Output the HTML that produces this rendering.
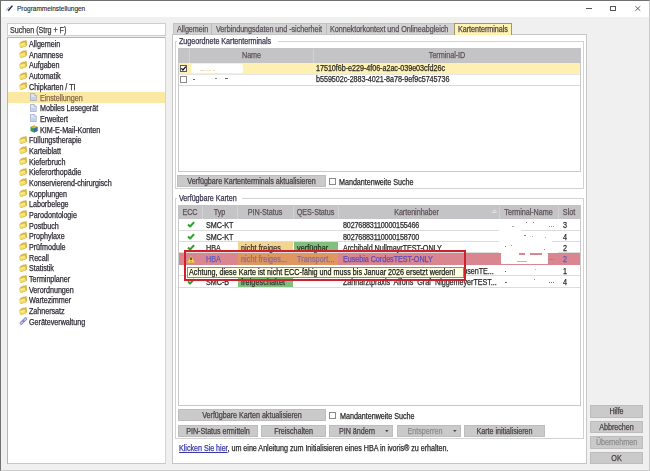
<!DOCTYPE html>
<html><head><meta charset="utf-8">
<style>
*{box-sizing:border-box;margin:0;padding:0}
html,body{width:650px;height:471px;overflow:hidden;background:#f0f0f0}
body{position:relative;font-family:"Liberation Sans",sans-serif;font-size:7.4px;color:#3a3640}
.a{position:absolute}
svg{position:absolute;overflow:visible}
.t{position:absolute;white-space:nowrap;line-height:10px;font-size:8.2px;letter-spacing:-0.05px;-webkit-text-stroke:0.25px currentColor;transform:scaleX(0.88);transform-origin:0 0}
.c{transform-origin:50% 0}
.btn{position:absolute;background:#cacaca;border:1px solid #bababa}
.cb{position:absolute;width:7px;height:7px;border:1px solid #7a7a7a;background:#fff}
</style></head><body><div style="position:absolute;left:0;top:0;width:650px;height:471px;filter:blur(0.3px)">

<div class="a" style="left:0px;top:0px;width:650px;height:471px;border:1px solid #707070;border-right-color:#c8c8c8;border-bottom-color:#cacaca"></div>
<div class="a" style="left:1px;top:1px;width:648px;height:16px;background:#fff"></div>
<svg style="left:5px;top:4px" width="9" height="9" viewBox="0 0 9 9"><path d="M1.2 6.6 L3.8 3.2" stroke="#7a8aa8" stroke-width="0.8"/><path d="M3.2 6.8 L7.4 1.6" stroke="#1a2a4a" stroke-width="1.5"/></svg>
<div class="t" style="left:16.6px;top:4.3px;font-size:7.45px;letter-spacing:-0.05px;color:#1e1e1e;-webkit-text-stroke:0.1px #1e1e1e">Programmeinstellungen</div>
<div class="a" style="left:586px;top:8px;width:6px;height:1px;background:#555"></div>
<div class="a" style="left:610px;top:6px;width:6px;height:5px;border:1px solid #555"></div>
<svg style="left:635px;top:6px" width="6" height="5" viewBox="0 0 6 5"><path d="M0.3 0.2 L5.3 4.8 M5.3 0.2 L0.3 4.8" stroke="#444" stroke-width="0.8"/></svg>
<div class="a" style="left:7px;top:23px;width:159px;height:13px;background:#fff;border:1px solid #cfcfcf"></div>
<div class="t" style="left:10px;top:25.5px;color:#3a3a3a">Suchen (Strg + F)</div>
<div class="a" style="left:7px;top:37px;width:159px;height:427px;background:#fff;border:1px solid #b4b4b4;border-right-color:#d4d4d4;border-bottom-color:#c8c8c8"></div>
<div class="a" style="left:8px;top:92px;width:157px;height:11px;background:#fbe8a2"></div>
<svg style="left:19px;top:39.5px" width="8" height="8" viewBox="0 0 8 8"><path d="M1.6 2.2 L4.4 0.9 L5 1.2 L7.2 0.4 L7.7 5.2 L2.6 7.4 Z" fill="#e2bc34" stroke="#b08e1e" stroke-width="0.45"/><path d="M0.4 3.6 L6.2 2 L7.2 6 L1.5 7.7 Z" fill="#f8e064" stroke="#c8a830" stroke-width="0.4"/><path d="M1.4 4.2 L5.6 3 L6 4 L1.8 5.3 Z" fill="#fff2a8" opacity="0.8"/></svg>
<div class="t" style="left:29px;top:40.1px;color:#2e2a34">Allgemein</div>
<svg style="left:19px;top:50.2px" width="8" height="8" viewBox="0 0 8 8"><path d="M1.6 2.2 L4.4 0.9 L5 1.2 L7.2 0.4 L7.7 5.2 L2.6 7.4 Z" fill="#e2bc34" stroke="#b08e1e" stroke-width="0.45"/><path d="M0.4 3.6 L6.2 2 L7.2 6 L1.5 7.7 Z" fill="#f8e064" stroke="#c8a830" stroke-width="0.4"/><path d="M1.4 4.2 L5.6 3 L6 4 L1.8 5.3 Z" fill="#fff2a8" opacity="0.8"/></svg>
<div class="t" style="left:29px;top:50.78px;color:#2e2a34">Anamnese</div>
<svg style="left:19px;top:60.9px" width="8" height="8" viewBox="0 0 8 8"><path d="M1.6 2.2 L4.4 0.9 L5 1.2 L7.2 0.4 L7.7 5.2 L2.6 7.4 Z" fill="#e2bc34" stroke="#b08e1e" stroke-width="0.45"/><path d="M0.4 3.6 L6.2 2 L7.2 6 L1.5 7.7 Z" fill="#f8e064" stroke="#c8a830" stroke-width="0.4"/><path d="M1.4 4.2 L5.6 3 L6 4 L1.8 5.3 Z" fill="#fff2a8" opacity="0.8"/></svg>
<div class="t" style="left:29px;top:61.46px;color:#2e2a34">Aufgaben</div>
<svg style="left:19px;top:71.5px" width="8" height="8" viewBox="0 0 8 8"><path d="M1.6 2.2 L4.4 0.9 L5 1.2 L7.2 0.4 L7.7 5.2 L2.6 7.4 Z" fill="#e2bc34" stroke="#b08e1e" stroke-width="0.45"/><path d="M0.4 3.6 L6.2 2 L7.2 6 L1.5 7.7 Z" fill="#f8e064" stroke="#c8a830" stroke-width="0.4"/><path d="M1.4 4.2 L5.6 3 L6 4 L1.8 5.3 Z" fill="#fff2a8" opacity="0.8"/></svg>
<div class="t" style="left:29px;top:72.14px;color:#2e2a34">Automatik</div>
<svg style="left:19px;top:82.2px" width="8" height="8" viewBox="0 0 8 8"><path d="M1.6 2.2 L4.4 0.9 L5 1.2 L7.2 0.4 L7.7 5.2 L2.6 7.4 Z" fill="#e2bc34" stroke="#b08e1e" stroke-width="0.45"/><path d="M0.4 3.6 L6.2 2 L7.2 6 L1.5 7.7 Z" fill="#f8e064" stroke="#c8a830" stroke-width="0.4"/><path d="M1.4 4.2 L5.6 3 L6 4 L1.8 5.3 Z" fill="#fff2a8" opacity="0.8"/></svg>
<div class="t" style="left:29px;top:82.82px;color:#2e2a34">Chipkarten / TI</div>
<svg style="left:30px;top:92.9px" width="7" height="8" viewBox="0 0 7 8"><path d="M0.5 0.5 H4.3 L6.3 2.5 V7.5 H0.5 Z" fill="#dde5f4" stroke="#8694b4" stroke-width="0.6"/><path d="M1.2 4 H5.6 V7 H1.2 Z" fill="#c4d0ec"/><path d="M4.3 0.5 V2.5 H6.3" fill="#fff" stroke="#8694b4" stroke-width="0.5"/></svg>
<div class="t" style="left:39.5px;top:93.5px;color:#86684a">Einstellungen</div>
<svg style="left:30px;top:103.6px" width="7" height="8" viewBox="0 0 7 8"><path d="M0.5 0.5 H4.3 L6.3 2.5 V7.5 H0.5 Z" fill="#dde5f4" stroke="#8694b4" stroke-width="0.6"/><path d="M1.2 4 H5.6 V7 H1.2 Z" fill="#c4d0ec"/><path d="M4.3 0.5 V2.5 H6.3" fill="#fff" stroke="#8694b4" stroke-width="0.5"/></svg>
<div class="t" style="left:39.5px;top:104.18px;color:#2e2a34">Mobiles Lesegerät</div>
<svg style="left:30px;top:114.3px" width="7" height="8" viewBox="0 0 7 8"><path d="M0.5 0.5 H4.3 L6.3 2.5 V7.5 H0.5 Z" fill="#dde5f4" stroke="#8694b4" stroke-width="0.6"/><path d="M1.2 4 H5.6 V7 H1.2 Z" fill="#c4d0ec"/><path d="M4.3 0.5 V2.5 H6.3" fill="#fff" stroke="#8694b4" stroke-width="0.5"/></svg>
<div class="t" style="left:39.5px;top:114.86px;color:#2e2a34">Erweitert</div>
<svg style="left:30px;top:124.9px" width="8" height="8" viewBox="0 0 8 8"><path d="M4 0.5 L7.5 2 V6 L4 7.5 L0.5 6 V2 Z" fill="#3a9a4a"/><path d="M0.5 2 L4 3.5 L7.5 2 L4 0.5 Z" fill="#e8b030"/><path d="M4 3.5 V7.5 L7.5 6 V2 Z" fill="#3a6ab0"/></svg>
<div class="t" style="left:39.5px;top:125.54px;color:#2e2a34">KIM-E-Mail-Konten</div>
<svg style="left:19px;top:135.6px" width="8" height="8" viewBox="0 0 8 8"><path d="M1.6 2.2 L4.4 0.9 L5 1.2 L7.2 0.4 L7.7 5.2 L2.6 7.4 Z" fill="#e2bc34" stroke="#b08e1e" stroke-width="0.45"/><path d="M0.4 3.6 L6.2 2 L7.2 6 L1.5 7.7 Z" fill="#f8e064" stroke="#c8a830" stroke-width="0.4"/><path d="M1.4 4.2 L5.6 3 L6 4 L1.8 5.3 Z" fill="#fff2a8" opacity="0.8"/></svg>
<div class="t" style="left:29px;top:136.22px;color:#2e2a34">Füllungstherapie</div>
<svg style="left:19px;top:146.3px" width="8" height="8" viewBox="0 0 8 8"><path d="M1.6 2.2 L4.4 0.9 L5 1.2 L7.2 0.4 L7.7 5.2 L2.6 7.4 Z" fill="#e2bc34" stroke="#b08e1e" stroke-width="0.45"/><path d="M0.4 3.6 L6.2 2 L7.2 6 L1.5 7.7 Z" fill="#f8e064" stroke="#c8a830" stroke-width="0.4"/><path d="M1.4 4.2 L5.6 3 L6 4 L1.8 5.3 Z" fill="#fff2a8" opacity="0.8"/></svg>
<div class="t" style="left:29px;top:146.9px;color:#2e2a34">Karteiblatt</div>
<svg style="left:19px;top:157.0px" width="8" height="8" viewBox="0 0 8 8"><path d="M1.6 2.2 L4.4 0.9 L5 1.2 L7.2 0.4 L7.7 5.2 L2.6 7.4 Z" fill="#e2bc34" stroke="#b08e1e" stroke-width="0.45"/><path d="M0.4 3.6 L6.2 2 L7.2 6 L1.5 7.7 Z" fill="#f8e064" stroke="#c8a830" stroke-width="0.4"/><path d="M1.4 4.2 L5.6 3 L6 4 L1.8 5.3 Z" fill="#fff2a8" opacity="0.8"/></svg>
<div class="t" style="left:29px;top:157.58px;color:#2e2a34">Kieferbruch</div>
<svg style="left:19px;top:167.7px" width="8" height="8" viewBox="0 0 8 8"><path d="M1.6 2.2 L4.4 0.9 L5 1.2 L7.2 0.4 L7.7 5.2 L2.6 7.4 Z" fill="#e2bc34" stroke="#b08e1e" stroke-width="0.45"/><path d="M0.4 3.6 L6.2 2 L7.2 6 L1.5 7.7 Z" fill="#f8e064" stroke="#c8a830" stroke-width="0.4"/><path d="M1.4 4.2 L5.6 3 L6 4 L1.8 5.3 Z" fill="#fff2a8" opacity="0.8"/></svg>
<div class="t" style="left:29px;top:168.26px;color:#2e2a34">Kieferorthopädie</div>
<svg style="left:19px;top:178.3px" width="8" height="8" viewBox="0 0 8 8"><path d="M1.6 2.2 L4.4 0.9 L5 1.2 L7.2 0.4 L7.7 5.2 L2.6 7.4 Z" fill="#e2bc34" stroke="#b08e1e" stroke-width="0.45"/><path d="M0.4 3.6 L6.2 2 L7.2 6 L1.5 7.7 Z" fill="#f8e064" stroke="#c8a830" stroke-width="0.4"/><path d="M1.4 4.2 L5.6 3 L6 4 L1.8 5.3 Z" fill="#fff2a8" opacity="0.8"/></svg>
<div class="t" style="left:29px;top:178.94px;color:#2e2a34">Konservierend-chirurgisch</div>
<svg style="left:19px;top:189.0px" width="8" height="8" viewBox="0 0 8 8"><path d="M1.6 2.2 L4.4 0.9 L5 1.2 L7.2 0.4 L7.7 5.2 L2.6 7.4 Z" fill="#e2bc34" stroke="#b08e1e" stroke-width="0.45"/><path d="M0.4 3.6 L6.2 2 L7.2 6 L1.5 7.7 Z" fill="#f8e064" stroke="#c8a830" stroke-width="0.4"/><path d="M1.4 4.2 L5.6 3 L6 4 L1.8 5.3 Z" fill="#fff2a8" opacity="0.8"/></svg>
<div class="t" style="left:29px;top:189.62px;color:#2e2a34">Kopplungen</div>
<svg style="left:19px;top:199.7px" width="8" height="8" viewBox="0 0 8 8"><path d="M1.6 2.2 L4.4 0.9 L5 1.2 L7.2 0.4 L7.7 5.2 L2.6 7.4 Z" fill="#e2bc34" stroke="#b08e1e" stroke-width="0.45"/><path d="M0.4 3.6 L6.2 2 L7.2 6 L1.5 7.7 Z" fill="#f8e064" stroke="#c8a830" stroke-width="0.4"/><path d="M1.4 4.2 L5.6 3 L6 4 L1.8 5.3 Z" fill="#fff2a8" opacity="0.8"/></svg>
<div class="t" style="left:29px;top:200.3px;color:#2e2a34">Laborbelege</div>
<svg style="left:19px;top:210.4px" width="8" height="8" viewBox="0 0 8 8"><path d="M1.6 2.2 L4.4 0.9 L5 1.2 L7.2 0.4 L7.7 5.2 L2.6 7.4 Z" fill="#e2bc34" stroke="#b08e1e" stroke-width="0.45"/><path d="M0.4 3.6 L6.2 2 L7.2 6 L1.5 7.7 Z" fill="#f8e064" stroke="#c8a830" stroke-width="0.4"/><path d="M1.4 4.2 L5.6 3 L6 4 L1.8 5.3 Z" fill="#fff2a8" opacity="0.8"/></svg>
<div class="t" style="left:29px;top:210.98px;color:#2e2a34">Parodontologie</div>
<svg style="left:19px;top:221.1px" width="8" height="8" viewBox="0 0 8 8"><path d="M1.6 2.2 L4.4 0.9 L5 1.2 L7.2 0.4 L7.7 5.2 L2.6 7.4 Z" fill="#e2bc34" stroke="#b08e1e" stroke-width="0.45"/><path d="M0.4 3.6 L6.2 2 L7.2 6 L1.5 7.7 Z" fill="#f8e064" stroke="#c8a830" stroke-width="0.4"/><path d="M1.4 4.2 L5.6 3 L6 4 L1.8 5.3 Z" fill="#fff2a8" opacity="0.8"/></svg>
<div class="t" style="left:29px;top:221.66px;color:#2e2a34">Postbuch</div>
<svg style="left:19px;top:231.7px" width="8" height="8" viewBox="0 0 8 8"><path d="M1.6 2.2 L4.4 0.9 L5 1.2 L7.2 0.4 L7.7 5.2 L2.6 7.4 Z" fill="#e2bc34" stroke="#b08e1e" stroke-width="0.45"/><path d="M0.4 3.6 L6.2 2 L7.2 6 L1.5 7.7 Z" fill="#f8e064" stroke="#c8a830" stroke-width="0.4"/><path d="M1.4 4.2 L5.6 3 L6 4 L1.8 5.3 Z" fill="#fff2a8" opacity="0.8"/></svg>
<div class="t" style="left:29px;top:232.34px;color:#2e2a34">Prophylaxe</div>
<svg style="left:19px;top:242.4px" width="8" height="8" viewBox="0 0 8 8"><path d="M1.6 2.2 L4.4 0.9 L5 1.2 L7.2 0.4 L7.7 5.2 L2.6 7.4 Z" fill="#e2bc34" stroke="#b08e1e" stroke-width="0.45"/><path d="M0.4 3.6 L6.2 2 L7.2 6 L1.5 7.7 Z" fill="#f8e064" stroke="#c8a830" stroke-width="0.4"/><path d="M1.4 4.2 L5.6 3 L6 4 L1.8 5.3 Z" fill="#fff2a8" opacity="0.8"/></svg>
<div class="t" style="left:29px;top:243.02px;color:#2e2a34">Prüfmodule</div>
<svg style="left:19px;top:253.1px" width="8" height="8" viewBox="0 0 8 8"><path d="M1.6 2.2 L4.4 0.9 L5 1.2 L7.2 0.4 L7.7 5.2 L2.6 7.4 Z" fill="#e2bc34" stroke="#b08e1e" stroke-width="0.45"/><path d="M0.4 3.6 L6.2 2 L7.2 6 L1.5 7.7 Z" fill="#f8e064" stroke="#c8a830" stroke-width="0.4"/><path d="M1.4 4.2 L5.6 3 L6 4 L1.8 5.3 Z" fill="#fff2a8" opacity="0.8"/></svg>
<div class="t" style="left:29px;top:253.7px;color:#2e2a34">Recall</div>
<svg style="left:19px;top:263.8px" width="8" height="8" viewBox="0 0 8 8"><path d="M1.6 2.2 L4.4 0.9 L5 1.2 L7.2 0.4 L7.7 5.2 L2.6 7.4 Z" fill="#e2bc34" stroke="#b08e1e" stroke-width="0.45"/><path d="M0.4 3.6 L6.2 2 L7.2 6 L1.5 7.7 Z" fill="#f8e064" stroke="#c8a830" stroke-width="0.4"/><path d="M1.4 4.2 L5.6 3 L6 4 L1.8 5.3 Z" fill="#fff2a8" opacity="0.8"/></svg>
<div class="t" style="left:29px;top:264.38px;color:#2e2a34">Statistik</div>
<svg style="left:19px;top:274.5px" width="8" height="8" viewBox="0 0 8 8"><path d="M1.6 2.2 L4.4 0.9 L5 1.2 L7.2 0.4 L7.7 5.2 L2.6 7.4 Z" fill="#e2bc34" stroke="#b08e1e" stroke-width="0.45"/><path d="M0.4 3.6 L6.2 2 L7.2 6 L1.5 7.7 Z" fill="#f8e064" stroke="#c8a830" stroke-width="0.4"/><path d="M1.4 4.2 L5.6 3 L6 4 L1.8 5.3 Z" fill="#fff2a8" opacity="0.8"/></svg>
<div class="t" style="left:29px;top:275.06px;color:#2e2a34">Terminplaner</div>
<svg style="left:19px;top:285.1px" width="8" height="8" viewBox="0 0 8 8"><path d="M1.6 2.2 L4.4 0.9 L5 1.2 L7.2 0.4 L7.7 5.2 L2.6 7.4 Z" fill="#e2bc34" stroke="#b08e1e" stroke-width="0.45"/><path d="M0.4 3.6 L6.2 2 L7.2 6 L1.5 7.7 Z" fill="#f8e064" stroke="#c8a830" stroke-width="0.4"/><path d="M1.4 4.2 L5.6 3 L6 4 L1.8 5.3 Z" fill="#fff2a8" opacity="0.8"/></svg>
<div class="t" style="left:29px;top:285.74px;color:#2e2a34">Verordnungen</div>
<svg style="left:19px;top:295.8px" width="8" height="8" viewBox="0 0 8 8"><path d="M1.6 2.2 L4.4 0.9 L5 1.2 L7.2 0.4 L7.7 5.2 L2.6 7.4 Z" fill="#e2bc34" stroke="#b08e1e" stroke-width="0.45"/><path d="M0.4 3.6 L6.2 2 L7.2 6 L1.5 7.7 Z" fill="#f8e064" stroke="#c8a830" stroke-width="0.4"/><path d="M1.4 4.2 L5.6 3 L6 4 L1.8 5.3 Z" fill="#fff2a8" opacity="0.8"/></svg>
<div class="t" style="left:29px;top:296.42px;color:#2e2a34">Wartezimmer</div>
<svg style="left:19px;top:306.5px" width="8" height="8" viewBox="0 0 8 8"><path d="M1.6 2.2 L4.4 0.9 L5 1.2 L7.2 0.4 L7.7 5.2 L2.6 7.4 Z" fill="#e2bc34" stroke="#b08e1e" stroke-width="0.45"/><path d="M0.4 3.6 L6.2 2 L7.2 6 L1.5 7.7 Z" fill="#f8e064" stroke="#c8a830" stroke-width="0.4"/><path d="M1.4 4.2 L5.6 3 L6 4 L1.8 5.3 Z" fill="#fff2a8" opacity="0.8"/></svg>
<div class="t" style="left:29px;top:307.1px;color:#2e2a34">Zahnersatz</div>
<svg style="left:19px;top:317.2px" width="9" height="8" viewBox="0 0 9 8"><path d="M2.2 6.2 L6.6 1.8" stroke="#8a8ac0" stroke-width="3.2" stroke-linecap="round"/><path d="M2.2 6.2 L6.6 1.8" stroke="#c4c4ec" stroke-width="1.6" stroke-linecap="round"/><circle cx="4.4" cy="4" r="1.1" fill="#8080b8"/></svg>
<div class="t" style="left:29px;top:317.78px;color:#2e2a34">Geräteverwaltung</div>
<div class="a" style="left:173px;top:23px;width:282px;height:12px;background:#d3d3d3;border:1px solid #c2c2c2"></div>
<div class="a" style="left:211px;top:24px;width:1px;height:10px;background:#bcbcbc"></div>
<div class="a" style="left:326px;top:24px;width:1px;height:10px;background:#bcbcbc"></div>
<div class="t" style="left:176.5px;top:24.6px;color:#5a5058">Allgemein</div>
<div class="t" style="left:215.5px;top:24.6px;color:#5a5058">Verbindungsdaten und -sicherheit</div>
<div class="t" style="left:330px;top:24.6px;color:#5a5058">Konnektorkontext und Onlineabgleich</div>
<div class="a" style="left:172px;top:34px;width:415px;height:430px;background:#fff;border:1px solid #c6c6c6"></div>
<div class="a" style="left:454px;top:23px;width:58px;height:12px;background:#fff3b4;border:1px solid #a09870;border-bottom:none"></div>
<div class="t" style="left:458px;top:24.9px;color:#4e4048">Kartenterminals</div>
<div class="a" style="left:175px;top:41px;width:409px;height:148px;border:1px solid #d2d2d2"></div>
<div class="a" style="left:177px;top:37px;width:101px;height:9px;background:#fff"></div>
<div class="t" style="left:178.5px;top:36.8px;color:#3a3450">Zugeordnete Kartenterminals</div>
<div class="a" style="left:178px;top:48px;width:403px;height:124px;border:1px solid #c8c8c8;background:#fff"></div>
<div class="a" style="left:178px;top:48px;width:403px;height:15px;background:#c4c4c6"></div>
<div class="a" style="left:189px;top:49px;width:1px;height:14px;background:#d2d2d2"></div>
<div class="a" style="left:313px;top:49px;width:1px;height:14px;background:#d2d2d2"></div>
<div class="t c" style="left:190px;width:123px;text-align:center;top:51.4px;color:#5e5258">Name</div>
<div class="t c" style="left:314px;width:266px;text-align:center;top:51.4px;color:#5e5258">Terminal-ID</div>
<div class="a" style="left:179px;top:63px;width:401px;height:11px;background:#fdf0b0"></div>
<div class="a" style="left:179px;top:74px;width:401px;height:1px;background:#e6e6e6"></div>
<div class="a" style="left:179px;top:85px;width:401px;height:1px;background:#d8d8d8"></div>
<div class="a" style="left:180px;top:65px;width:7px;height:7px;background:#fff;border:1px solid #5a5a5a"></div>
<svg style="left:180px;top:65px" width="7" height="7" viewBox="0 0 7 7"><path d="M1.4 3.4 L2.9 5 L5.8 1.6" stroke="#111" stroke-width="1.2" fill="none"/></svg>
<div class="a" style="left:180px;top:76px;width:7px;height:7px;background:#fff;border:1px solid #8a8a8a"></div>
<div class="a" style="left:191px;top:64px;width:52px;height:9px;background:#fff;border-radius:2px"></div>
<div class="t" style="left:316px;top:64.4px;color:#2a2a2a">17510f6b-e229-4f06-a2ac-039e03cfd26c</div>
<div class="t" style="left:316px;top:75.4px;color:#2a2a2a">b559502c-2883-4021-8a78-9ef9c5745736</div>
<div class="a" style="left:200px;top:70px;width:4px;height:1px;background:#f0dca0"></div>
<div class="a" style="left:205px;top:70px;width:6px;height:1px;background:#f4e4b8"></div>
<div class="a" style="left:213px;top:70px;width:2px;height:1px;background:#f0dca0"></div>
<div class="a" style="left:193px;top:79px;width:2px;height:1px;background:#666"></div>
<div class="a" style="left:215px;top:78px;width:2px;height:1px;background:#888"></div>
<div class="a" style="left:225px;top:78px;width:3px;height:1px;background:#666"></div>
<div class="a" style="left:177px;top:175px;width:149px;height:12px;background:#cacaca;border:1px solid #bdbdbd"></div>
<div class="t c" style="left:177px;width:149px;text-align:center;top:176.7px;color:#4a4048">Verfügbare Kartenterminals aktualisieren</div>
<div class="a" style="left:329px;top:178px;width:7px;height:7px;background:#fff;border:1px solid #8a8a8a"></div>
<div class="t" style="left:339px;top:178.4px;color:#2a2a2a">Mandantenweite Suche</div>
<div class="a" style="left:175px;top:198px;width:409px;height:241px;border:1px solid #d2d2d2"></div>
<div class="a" style="left:177px;top:193px;width:65px;height:9px;background:#fff"></div>
<div class="t" style="left:178.5px;top:193.6px;color:#3a3450">Verfügbare Karten</div>
<div class="a" style="left:178px;top:205px;width:403px;height:201px;border:1px solid #c8c8c8;background:#fff"></div>
<div class="a" style="left:178px;top:205px;width:403px;height:14px;background:#c4c4c6"></div>
<div class="a" style="left:202px;top:206px;width:1px;height:13px;background:#d2d2d2"></div>
<div class="a" style="left:237px;top:206px;width:1px;height:13px;background:#d2d2d2"></div>
<div class="a" style="left:293px;top:206px;width:1px;height:13px;background:#d2d2d2"></div>
<div class="a" style="left:338px;top:206px;width:1px;height:13px;background:#d2d2d2"></div>
<div class="a" style="left:499px;top:206px;width:1px;height:13px;background:#d2d2d2"></div>
<div class="a" style="left:558px;top:206px;width:1px;height:13px;background:#d2d2d2"></div>
<div class="t c" style="left:178px;width:24px;text-align:center;top:208.4px;color:#5e5258">ECC</div>
<div class="t c" style="left:202px;width:35px;text-align:center;top:208.4px;color:#5e5258">Typ</div>
<div class="t c" style="left:237px;width:56px;text-align:center;top:208.4px;color:#5e5258">PIN-Status</div>
<div class="t c" style="left:293px;width:45px;text-align:center;top:208.4px;color:#5e5258">QES-Status</div>
<div class="t c" style="left:338px;width:157px;text-align:center;top:208.4px;color:#5e5258">Karteninhaber</div>
<div class="t c" style="left:499px;width:59px;text-align:center;top:208.4px;color:#5e5258">Terminal-Name</div>
<div class="t c" style="left:558px;width:22px;text-align:center;top:208.4px;color:#5e5258">Slot</div>
<svg style="left:492px;top:209px" width="5" height="4" viewBox="0 0 5 4"><path d="M0.5 3.5 L2.5 0.5 L4.5 3.5 Z" fill="none" stroke="#eeeeee" stroke-width="0.7"/></svg>
<div class="a" style="left:179px;top:230px;width:401px;height:1px;background:#dcdcdc"></div>
<svg style="left:186.9px;top:221px" width="8" height="7" viewBox="0 0 8 7"><path d="M1 3.5 L3.1 5.5 L7.1 1.1" stroke="#28a228" stroke-width="2" fill="none" stroke-linejoin="round"/></svg>
<div class="t" style="left:206px;top:221.4px;color:#2a2a2a">SMC-KT</div>
<div class="t" style="left:342.5px;top:221.4px;color:#2a2a2a;letter-spacing:-0.2px">80276883110000155466</div>
<div class="t" style="left:562.5px;top:221.4px;color:#2a2a2a">3</div>
<div class="a" style="left:179px;top:241px;width:401px;height:1px;background:#dcdcdc"></div>
<svg style="left:186.9px;top:233px" width="8" height="7" viewBox="0 0 8 7"><path d="M1 3.5 L3.1 5.5 L7.1 1.1" stroke="#28a228" stroke-width="2" fill="none" stroke-linejoin="round"/></svg>
<div class="t" style="left:206px;top:232.9px;color:#2a2a2a">SMC-KT</div>
<div class="t" style="left:342.5px;top:232.9px;color:#2a2a2a;letter-spacing:-0.2px">80276883110000158700</div>
<div class="t" style="left:562.5px;top:232.9px;color:#2a2a2a">4</div>
<div class="a" style="left:238px;top:242px;width:55px;height:10px;background:#f2d591"></div>
<div class="a" style="left:294px;top:242px;width:44px;height:10px;background:#7fc07f"></div>
<div class="a" style="left:179px;top:252px;width:401px;height:1px;background:#dcdcdc"></div>
<svg style="left:186.9px;top:244px" width="8" height="7" viewBox="0 0 8 7"><path d="M1 3.5 L3.1 5.5 L7.1 1.1" stroke="#28a228" stroke-width="2" fill="none" stroke-linejoin="round"/></svg>
<div class="t" style="left:206px;top:243.9px;color:#2a2a2a">HBA</div>
<div class="t" style="left:241px;top:243.9px;color:#3a3030;letter-spacing:0.1px">nicht freiges...</div>
<div class="t" style="left:296.5px;top:243.9px;color:#2a3020;letter-spacing:0.1px">verfügbar</div>
<div class="t" style="left:342.5px;top:243.9px;color:#2a2a2a">Archibald NullmayrTEST-ONLY</div>
<div class="t" style="left:562.5px;top:243.9px;color:#2a2a2a">2</div>
<div class="a" style="left:179px;top:253px;width:401px;height:12px;background:#d98690"></div>
<div class="a" style="left:238px;top:253px;width:100px;height:12px;background:#df9660"></div>
<svg style="left:187px;top:255.6px" width="8" height="7" viewBox="0 0 8 7"><path d="M4 0.3 L7.5 6.4 H0.5 Z" fill="#f4e23a" stroke="#d8c050" stroke-width="0.5" stroke-linejoin="round"/><path d="M4 1.6 V4.1" stroke="#111" stroke-width="1.2"/><path d="M4 4.8 V5.6" stroke="#333" stroke-width="0.9"/></svg>
<div class="t" style="left:206px;top:255.4px;color:#5a5ac0">HBA</div>
<div class="t" style="left:241px;top:255.4px;color:#8a6a98;letter-spacing:0.1px">nicht freiges...</div>
<div class="t" style="left:296.5px;top:255.4px;color:#8a6a98;letter-spacing:0.1px">Transport...</div>
<div class="t" style="left:342.5px;top:255.4px;color:#5e4cb4">Eusebia CordesTEST-ONLY</div>
<div class="t" style="left:562.5px;top:255.4px;color:#5a5ac0">2</div>
<div class="a" style="left:179px;top:275px;width:401px;height:1px;background:#dcdcdc"></div>
<svg style="left:186.9px;top:267px" width="8" height="7" viewBox="0 0 8 7"><path d="M1 3.5 L3.1 5.5 L7.1 1.1" stroke="#28a228" stroke-width="2" fill="none" stroke-linejoin="round"/></svg>
<div class="t" style="left:206px;top:266.9px;color:#2a2a2a">HBA</div>
<div class="t" style="left:342.5px;top:266.9px;color:#2a2a2a">Gunther Frau Prinzessin von WiesenhosenTE...</div>
<div class="t" style="left:562.5px;top:266.9px;color:#2a2a2a">1</div>
<div class="a" style="left:238px;top:276px;width:55px;height:11px;background:#7fc07f"></div>
<div class="a" style="left:179px;top:287px;width:401px;height:1px;background:#dcdcdc"></div>
<svg style="left:186.9px;top:278px" width="8" height="7" viewBox="0 0 8 7"><path d="M1 3.5 L3.1 5.5 L7.1 1.1" stroke="#28a228" stroke-width="2" fill="none" stroke-linejoin="round"/></svg>
<div class="t" style="left:206px;top:278.4px;color:#2a2a2a">SMC-B</div>
<div class="t" style="left:241px;top:278.4px;color:#3a3030;letter-spacing:0.1px">freigeschaltet</div>
<div class="t" style="left:342.5px;top:278.4px;color:#2a2a2a">Zahnarztpraxis&nbsp; Alfons&nbsp; Graf&nbsp; NiggemeyerTEST...</div>
<div class="t" style="left:562.5px;top:278.4px;color:#2a2a2a">4</div>
<div class="a" style="left:499px;top:219px;width:59px;height:34px;background:#fff"></div>
<div class="a" style="left:521px;top:230px;width:37px;height:1px;background:#dcdcdc"></div>
<div class="a" style="left:552px;top:241px;width:6px;height:1px;background:#dcdcdc"></div>
<div class="a" style="left:501px;top:253px;width:47px;height:11px;background:#fff;border-radius:1px"></div>
<div class="a" style="left:519px;top:253px;width:6px;height:2px;background:#d98690"></div>
<div class="a" style="left:530px;top:253px;width:12px;height:2px;background:#d98690"></div>
<div class="a" style="left:517px;top:261px;width:10px;height:1px;background:#e0a8b0"></div>
<div class="a" style="left:526px;top:222px;width:1px;height:1px;background:#777"></div>
<div class="a" style="left:533px;top:222px;width:1px;height:1px;background:#888"></div>
<div class="a" style="left:512px;top:226px;width:2px;height:1px;background:#aaa"></div>
<div class="a" style="left:549px;top:226px;width:1px;height:1px;background:#999"></div>
<div class="a" style="left:551px;top:226px;width:1px;height:1px;background:#999"></div>
<div class="a" style="left:553px;top:226px;width:1px;height:1px;background:#999"></div>
<div class="a" style="left:524px;top:235px;width:2px;height:1px;background:#888"></div>
<div class="a" style="left:532px;top:236px;width:1px;height:1px;background:#aaa"></div>
<div class="a" style="left:545px;top:237px;width:1px;height:1px;background:#aaa"></div>
<div class="a" style="left:505px;top:246px;width:1px;height:1px;background:#777"></div>
<div class="a" style="left:511px;top:245px;width:1px;height:1px;background:#aaa"></div>
<div class="a" style="left:544px;top:249px;width:1px;height:1px;background:#888"></div>
<div class="a" style="left:549px;top:259px;width:1px;height:1px;background:#b06a80"></div>
<div class="a" style="left:551px;top:259px;width:1px;height:1px;background:#b06a80"></div>
<div class="a" style="left:553px;top:259px;width:1px;height:1px;background:#b06a80"></div>
<div class="a" style="left:505px;top:271px;width:1px;height:1px;background:#555"></div>
<div class="a" style="left:535px;top:269px;width:1px;height:1px;background:#bbb"></div>
<div class="a" style="left:505px;top:282px;width:2px;height:1px;background:#666"></div>
<div class="a" style="left:534px;top:279px;width:1px;height:1px;background:#888"></div>
<div class="a" style="left:549px;top:282px;width:1px;height:1px;background:#777"></div>
<div class="a" style="left:551px;top:282px;width:1px;height:1px;background:#777"></div>
<div class="a" style="left:553px;top:282px;width:1px;height:1px;background:#777"></div>
<div class="a" style="left:184px;top:250px;width:282px;height:31px;border:2px solid #d0212a"></div>
<div class="a" style="left:186.6px;top:267px;width:277.4px;height:11px;background:#ffffe1;border:1px solid #8c8c8c"></div>
<div class="t" style="left:189px;top:268.2px;color:#1a1a1a;letter-spacing:0px">Achtung, diese Karte ist nicht ECC-fähig und muss bis Januar 2026 ersetzt werden!</div>
<div class="a" style="left:178px;top:409px;width:148px;height:12px;background:#cacaca;border:1px solid #bdbdbd"></div>
<div class="t c" style="left:178px;width:148px;text-align:center;top:410.7px;color:#4a4048">Verfügbare Karten aktualisieren</div>
<div class="a" style="left:329px;top:412px;width:7px;height:7px;background:#fff;border:1px solid #8a8a8a"></div>
<div class="t" style="left:339.5px;top:412.4px;color:#2a2a2a">Mandantenweite Suche</div>
<div class="a" style="left:178px;top:425px;width:80px;height:12px;background:#cacaca;border:1px solid #bdbdbd"></div>
<div class="t c" style="left:178px;width:80px;text-align:center;top:426.7px;color:#4a4048">PIN-Status ermitteln</div>
<div class="a" style="left:261px;top:425px;width:65px;height:12px;background:#cacaca;border:1px solid #bdbdbd"></div>
<div class="t c" style="left:261px;width:65px;text-align:center;top:426.7px;color:#4a4048">Freischalten</div>
<div class="a" style="left:329px;top:425px;width:64px;height:12px;background:#cacaca;border:1px solid #bdbdbd"></div>
<div class="t c" style="left:329px;width:56px;text-align:center;top:426.7px;color:#4a4048">PIN ändern</div>
<svg style="left:385px;top:430.0px" width="4" height="3" viewBox="0 0 4 3"><path d="M0 0 H3.6 L1.8 2.2 Z" fill="#505050"/></svg>
<div class="a" style="left:397px;top:425px;width:64px;height:12px;background:#cacaca;border:1px solid #bdbdbd"></div>
<div class="t c" style="left:397px;width:56px;text-align:center;top:426.7px;color:#8c8c8c">Entsperren</div>
<svg style="left:453px;top:430.0px" width="4" height="3" viewBox="0 0 4 3"><path d="M0 0 H3.6 L1.8 2.2 Z" fill="#505050"/></svg>
<div class="a" style="left:464px;top:425px;width:81px;height:12px;background:#cacaca;border:1px solid #bdbdbd"></div>
<div class="t c" style="left:464px;width:81px;text-align:center;top:426.7px;color:#4a4048">Karte initialisieren</div>
<div class="t" style="left:179px;top:443.9px;color:#2a2a2a"><span style="color:#3a38a8;text-decoration:underline;text-underline-offset:1px;text-decoration-thickness:1px">Klicken Sie hier</span>, um eine Anleitung zum Initialisieren eines HBA in ivoris® zu erhalten.</div>
<div class="a" style="left:590px;top:405px;width:53px;height:13px;background:#cacaca;border:1px solid #bdbdbd"></div>
<div class="t c" style="left:590px;width:53px;text-align:center;top:407.2px;color:#4a4048">Hilfe</div>
<div class="a" style="left:590px;top:421px;width:53px;height:12px;background:#cacaca;border:1px solid #bdbdbd"></div>
<div class="t c" style="left:590px;width:53px;text-align:center;top:422.7px;color:#4a4048">Abbrechen</div>
<div class="a" style="left:590px;top:436px;width:53px;height:13px;background:#cacaca;border:1px solid #bdbdbd"></div>
<div class="t c" style="left:590px;width:53px;text-align:center;top:438.2px;color:#8e8e8e">Übernehmen</div>
<div class="a" style="left:590px;top:452px;width:53px;height:12px;background:#cacaca;border:1px solid #bdbdbd"></div>
<div class="t c" style="left:590px;width:53px;text-align:center;top:453.7px;color:#4a4048">OK</div>
</div></body></html>
